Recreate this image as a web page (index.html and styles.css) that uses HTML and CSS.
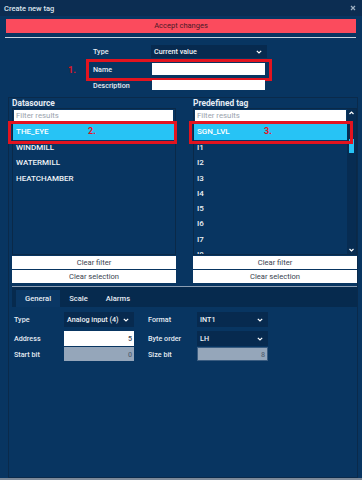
FILE: index.html
```
<!DOCTYPE html>
<html>
<head>
<meta charset="utf-8">
<link rel="stylesheet" href="styles.css">
</head>
<body>
<div class="titlebar">
  <span>Create new tag</span>
  <svg class="close" width="6" height="6" viewBox="0 0 6 6"><path d="M1 1L5 5M5 1L1 5" stroke="#9fb0c2" stroke-width="1.2"/></svg>
</div>
<div class="accept">Accept changes</div>
<div class="sep"></div>
<div class="meta">
  <div class="mrow">
    <span class="mlabel">Type</span>
    <div class="select wide"><span>Current value</span><svg width="6" height="4" viewBox="0 0 6 4"><path d="M0.8 0.8L3 3L5.2 0.8" stroke="#fff" fill="none" stroke-width="1.2"/></svg></div>
  </div>
  <div class="mrow name">
    <span class="mark one">1.</span>
    <span class="mlabel">Name</span>
    <div class="input wide-in"></div>
  </div>
  <div class="mrow desc">
    <span class="mlabel">Description</span>
    <div class="input wide-in"></div>
  </div>
</div>
<div class="frame">
  <div class="cols">
    <div class="col">
      <div class="ctitle">Datasource</div>
      <div class="list">
        <div class="lmain">
          <div class="filter">Filter results</div>
          <div class="item sel">THE_EYE</div>
          <div class="item">WINDMILL</div>
          <div class="item">WATERMILL</div>
          <div class="item">HEATCHAMBER</div>
        </div>
        <div class="annot left"></div>
        <span class="mark two">2.</span>
      </div>
      <div class="btn">Clear filter</div>
      <div class="btn">Clear selection</div>
    </div>
    <div class="col">
      <div class="ctitle">Predefined tag</div>
      <div class="list">
        <div class="lmain">
          <div class="filter">Filter results</div>
          <div class="item sel">SGN_LVL</div>
          <div class="item">I1</div>
          <div class="item">I2</div>
          <div class="item">I3</div>
          <div class="item">I4</div>
          <div class="item">I5</div>
          <div class="item">I6</div>
          <div class="item">I7</div>
          <div class="item">I8</div>
        </div>
        <div class="sbar">
          <svg class="arrow" width="5" height="4" viewBox="0 0 5 4"><path d="M0.5 3L2.5 1L4.5 3" stroke="#fff" fill="none" stroke-width="1.2"/></svg>
          <div class="thumb"></div>
          <div class="grow"></div>
          <svg class="arrow" width="5" height="4" viewBox="0 0 5 4"><path d="M0.5 1L2.5 3L4.5 1" stroke="#fff" fill="none" stroke-width="1.2"/></svg>
        </div>
        <div class="annot right"></div>
        <span class="mark three">3.</span>
      </div>
      <div class="btn">Clear filter</div>
      <div class="btn">Clear selection</div>
    </div>
  </div>
  <div class="tabpanel">
    <div class="tabs">
      <span class="tab active">General</span>
      <span class="tab">Scale</span>
      <span class="tab">Alarms</span>
    </div>
    <div class="form">
      <div class="frow r1">
        <span class="fl">Type</span>
        <div class="select f1"><span>Analog input (4)</span><svg width="6" height="4" viewBox="0 0 6 4"><path d="M0.8 0.8L3 3L5.2 0.8" stroke="#fff" fill="none" stroke-width="1.2"/></svg></div>
        <span class="fl2">Format</span>
        <div class="select f2"><span>INT1</span><svg width="6" height="4" viewBox="0 0 6 4"><path d="M0.8 0.8L3 3L5.2 0.8" stroke="#fff" fill="none" stroke-width="1.2"/></svg></div>
      </div>
      <div class="frow r2">
        <span class="fl">Address</span>
        <div class="num f1">5</div>
        <span class="fl2">Byte order</span>
        <div class="select f2"><span>LH</span><svg width="6" height="4" viewBox="0 0 6 4"><path d="M0.8 0.8L3 3L5.2 0.8" stroke="#fff" fill="none" stroke-width="1.2"/></svg></div>
      </div>
      <div class="frow r3">
        <span class="fl">Start bit</span>
        <div class="num dis f1">0</div>
        <span class="fl2">Size bit</span>
        <div class="num dis f2 out">8</div>
      </div>
    </div>
  </div>
</div>
<div class="bottom"></div>
</body>
</html>
```

FILE: styles.css
```
*, *::before, *::after { box-sizing: border-box; }
body {
  margin: 0;
  width: 362px;
  height: 480px;
  overflow: hidden;
  background: #083561;
  font-family: Roboto, "Liberation Sans", sans-serif;
  font-size: 7.2px;
  font-weight: 500;
  color: #e6ecf3;
}
.titlebar {
  height: 16px;
  display: flex;
  align-items: center;
  justify-content: space-between;
  padding: 0 6px 0 4px;
  background: #0c2d52;
  font-size: 7.5px;
  color: #dde5ee;
}
.accept {
  margin: 3px 6px 0 6px;
  height: 14px;
  line-height: 14px;
  background: #fb4b5d;
  color: #4a1a27;
  text-align: center;
  font-size: 7.5px;
  font-weight: 400;
}
.sep {
  margin: 4px 6px 0 5px;
  height: 1px;
  background: #c8d2dd;
}
.meta { margin-top: 7px; }
.mrow {
  position: relative;
  display: flex;
  align-items: center;
  margin-left: 93px;
  height: 13px;
}
.mrow.name { margin-top: 5px; height: 12px; }
.mrow.desc { margin-top: 5px; height: 10px; }
.mrow.name::after {
  content: "";
  position: absolute;
  left: -7px;
  top: -4px;
  width: 186px;
  height: 22px;
  border: 3px solid #e3141f;
}
.mlabel { width: 58px; }
.select {
  display: flex;
  align-items: center;
  justify-content: space-between;
  background: #072a4f;
  color: #eef2f6;
  padding: 0 5px 0 3px;
  height: 100%;
}
.select.wide { width: 116px; }
.input { background: #fff; height: 100%; }
.wide-in { width: 113px; margin-left: 1px; }
.mark {
  position: absolute;
  color: #e3141f;
  font-weight: bold;
  font-size: 9px;
  line-height: 10px;
}
.mark.one { left: -25px; top: 2px; }
.frame {
  margin: 7px 4px 0 8px;
  height: 381px;
  border: 1px solid #0a2a4b;
  padding: 0 0 0 3px;
}
.cols {
  display: grid;
  grid-template-columns: 164px 164px;
  column-gap: 17px;
}
.ctitle {
  height: 10px;
  line-height: 10px;
  font-weight: bold;
  font-size: 8.4px;
}
.list {
  position: relative;
  height: 147px;
  border: 1px solid #0a2948;
  display: flex;
}
.lmain {
  flex: 1;
  display: flex;
  flex-direction: column;
  overflow: hidden;
}
.filter {
  flex: none;
  margin: 1px 1px 0 1px;
  height: 11px;
  line-height: 11px;
  background: #fff;
  color: #9aa3ad;
  padding-left: 2px;
  font-size: 7.8px;
  font-weight: 400;
}
.cols .col:first-child .filter { margin-right: 2px; }
.item {
  flex: none;
  height: 15.3px;
  line-height: 15.3px;
  padding-left: 3px;
  color: #eef2f6;
  font-size: 8px;
}
.item.sel {
  margin-top: 3px;
  height: 16px;
  line-height: 16px;
  background: #27c3f5;
  color: #ffffff;
}
.sbar {
  width: 9px;
  background: #072c52;
  display: flex;
  flex-direction: column;
  align-items: center;
}
.arrow { margin: 2px 0; flex: none; }
.thumb {
  flex: none;
  margin-top: 22px;
  width: 5px;
  height: 14px;
  background: #27c3f5;
}
.grow { flex: 1; }
.annot {
  position: absolute;
  top: 12px;
  height: 23px;
  border: 3px solid #e3141f;
}
.annot.left { left: -5px; width: 169px; }
.annot.right { left: -5px; width: 164px; }
.mark.two { left: 75px; top: 17px; }
.mark.three { left: 70px; top: 17px; }
.btn {
  margin-top: 1px;
  height: 13px;
  line-height: 13px;
  background: #fff;
  color: #3a4350;
  text-align: center;
  font-size: 7.6px;
  font-weight: 400;
}
.tabpanel {
  margin-top: 3px;
  border-top: 1px solid #8c9eb3;
  padding-left: 2px;
}
.tabs {
  margin-left: -2px;
  height: 20px;
  background: #062a4e;
  display: flex;
  align-items: flex-end;
  padding-left: 4px;
}
.tab {
  height: 17px;
  line-height: 17px;
  padding: 0 9px;
  font-size: 7.6px;
}
.tab.active { background: #0a3764; }
.frow {
  display: flex;
  align-items: center;
  height: 15px;
}
.frow.r1 { margin-top: 5px; }
.frow.r2 { margin-top: 4px; }
.frow.r3 { margin-top: 1px; height: 14px; }
.fl { width: 50px; }
.fl2 { width: 63px; padding-left: 14px; }
.f1 { width: 70px; }
.f2 { width: 71px; }
.num {
  height: 100%;
  background: #fff;
  color: #3a4350;
  text-align: right;
  padding-right: 2px;
  display: flex;
  align-items: center;
  justify-content: flex-end;
}
.num.dis { background: #95a6ba; color: #556576; }
.num.out { border: 1px solid #3a5c80; }
.bottom {
  height: 2px;
  background: #7d8a99;
}
```
